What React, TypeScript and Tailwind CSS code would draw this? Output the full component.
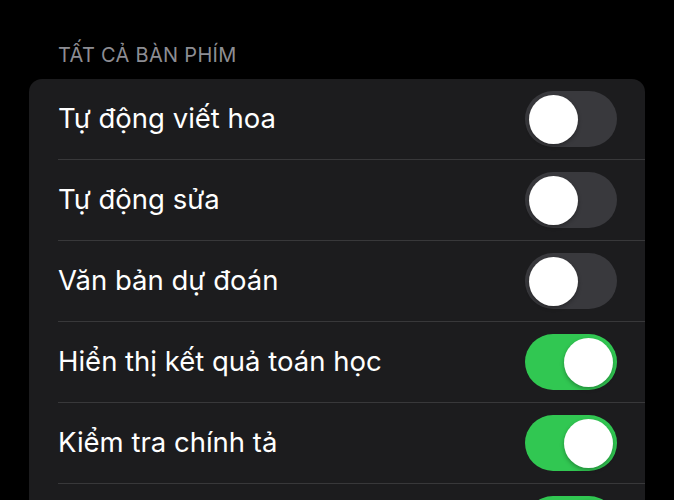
import React from "react";

const rows: { label: string; on: boolean }[] = [
  { label: "Tự động viết hoa", on: false },
  { label: "Tự động sửa", on: false },
  { label: "Văn bản dự đoán", on: false },
  { label: "Hiển thị kết quả toán học", on: true },
  { label: "Kiểm tra chính tả", on: true },
  { label: "Bật phím Caps Lock", on: true },
];

function Toggle({ on }: { on: boolean }) {
  return (
    <div
      className={
        on
          ? "w-[92px] h-[56px] rounded-full bg-[#31c752] flex items-center justify-end px-[4px] shrink-0"
          : "w-[92px] h-[56px] rounded-full bg-[#39393d] flex items-center justify-start px-[4px] shrink-0"
      }
    >
      <div className="w-[49px] h-[49px] rounded-full bg-white shadow-[0_2px_4px_rgba(0,0,0,0.3)]" />
    </div>
  );
}

export default function App() {
  return (
    <div
      className="w-[674px] h-[500px] bg-black overflow-hidden"
      style={{ fontFamily: "Inter, 'Noto Sans', sans-serif" }}
    >
      <div className="pt-[43px] pl-[58px] text-[20px] leading-[24px] text-[#8d8d93] tracking-[0.3px]">
        TẤT CẢ BÀN PHÍM
      </div>
      <div className="mt-[12px] ml-[29px] w-[616px] bg-[#1c1c1e] rounded-[13px] overflow-hidden">
        {rows.map((r, i) => (
          <div key={i} className="pl-[29px]">
            <div
              className={
                i === 0
                  ? "h-[80px] flex items-center justify-between pr-[28px]"
                  : "h-[81px] flex items-center justify-between pr-[28px] border-t border-[#38383a]"
              }
            >
              <span className="text-[27.5px] text-white">{r.label}</span>
              <Toggle on={r.on} />
            </div>
          </div>
        ))}
      </div>
    </div>
  );
}
